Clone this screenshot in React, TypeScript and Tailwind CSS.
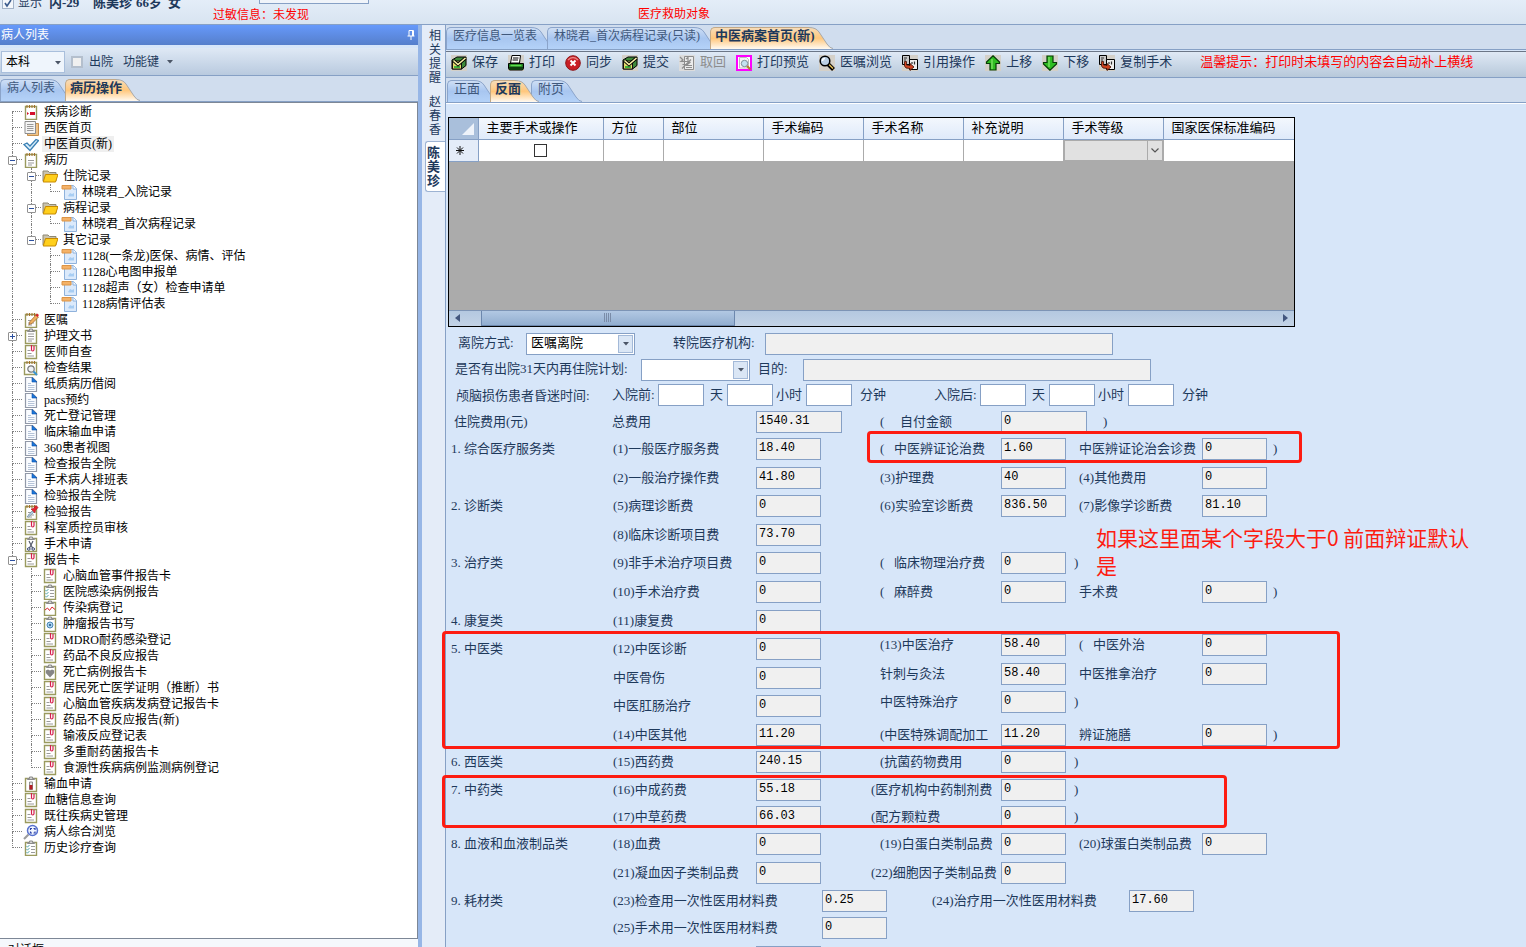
import React from "react";
import { clsx } from "clsx";

/* =====================================================
   DATA
===================================================== */
type TreeItem = {
  text: string;
  icon: string;
  closed?: boolean;
  selected?: boolean;
  children?: TreeItem[];
};

const tree: TreeItem[] = [
  { text: "疾病诊断", icon: "diagnosis" },
  { text: "西医首页", icon: "copy" },
  { text: "中医首页(新)", icon: "check", selected: true },
  {
    text: "病历",
    icon: "notebook",
    children: [
      { text: "住院记录", icon: "folder", children: [{ text: "林晓君_入院记录", icon: "record" }] },
      { text: "病程记录", icon: "folder", children: [{ text: "林晓君_首次病程记录", icon: "record" }] },
      {
        text: "其它记录",
        icon: "folder",
        children: [
          { text: "1128(一条龙)医保、病情、评估", icon: "record" },
          { text: "1128心电图申报单", icon: "record" },
          { text: "1128超声（女）检查申请单", icon: "record" },
          { text: "1128病情评估表", icon: "record" },
        ],
      },
    ],
  },
  { text: "医嘱", icon: "pencil" },
  { text: "护理文书", icon: "clipboard", closed: true },
  { text: "医师自查", icon: "report" },
  { text: "检查结果", icon: "search" },
  { text: "纸质病历借阅", icon: "file" },
  { text: "pacs预约", icon: "file" },
  { text: "死亡登记管理", icon: "file" },
  { text: "临床输血申请", icon: "file" },
  { text: "360患者视图", icon: "file" },
  { text: "检查报告全院", icon: "file" },
  { text: "手术病人排班表", icon: "file" },
  { text: "检验报告全院", icon: "file" },
  { text: "检验报告", icon: "dropper" },
  { text: "科室质控员审核", icon: "report" },
  { text: "手术申请", icon: "scissors" },
  {
    text: "报告卡",
    icon: "report",
    children: [
      { text: "心脑血管事件报告卡", icon: "report" },
      { text: "医院感染病例报告", icon: "checklist" },
      { text: "传染病登记", icon: "chart" },
      { text: "肿瘤报告书写", icon: "tumor" },
      { text: "MDRO耐药感染登记", icon: "report" },
      { text: "药品不良反应报告", icon: "report" },
      { text: "死亡病例报告卡", icon: "heart" },
      { text: "居民死亡医学证明（推断）书", icon: "report" },
      { text: "心脑血管疾病发病登记报告卡", icon: "report" },
      { text: "药品不良反应报告(新)", icon: "report" },
      { text: "输液反应登记表", icon: "report" },
      { text: "多重耐药菌报告卡", icon: "report" },
      { text: "食源性疾病病例监测病例登记", icon: "report" },
    ],
  },
  { text: "输血申请", icon: "blood" },
  { text: "血糖信息查询", icon: "report" },
  { text: "既往疾病史管理", icon: "report" },
  { text: "病人综合浏览", icon: "lens" },
  { text: "历史诊疗查询", icon: "checklist" },
];

const tools = [
  { text: "保存", icon: "save" },
  { text: "打印", icon: "print" },
  { text: "同步", icon: "sync" },
  { text: "提交", icon: "save" },
  { text: "取回", icon: "fetch", disabled: true },
  { text: "打印预览", icon: "preview" },
  { text: "医嘱浏览", icon: "browse" },
  { text: "引用操作", icon: "quote" },
  { text: "上移", icon: "up" },
  { text: "下移", icon: "down" },
  { text: "复制手术", icon: "quote" },
];

const columns = [
  { text: "主要手术或操作", width: "w-[125px]" },
  { text: "方位", width: "w-[60px]" },
  { text: "部位", width: "w-[100px]" },
  { text: "手术编码", width: "w-[100px]" },
  { text: "手术名称", width: "w-[100px]" },
  { text: "补充说明", width: "w-[100px]" },
  { text: "手术等级", width: "w-[100px]" },
  { text: "国家医保标准编码", width: "" },
];

type Fee = { name: string; value?: string; open?: boolean; wide?: boolean };
type FeeLine = {
  height: string;
  group?: string;
  a: Fee;
  b?: Fee;
  c?: Fee;
  close?: "b" | "c";
  low?: boolean;
};

const feeLines: FeeLine[] = [
  {
    height: "h-[29px]",
    group: "1. 综合医疗服务类",
    a: { name: "(1)一般医疗服务费", value: "18.40" },
    b: { name: "中医辨证论治费", value: "1.60", open: true },
    c: { name: "中医辨证论治会诊费", value: "0" },
    close: "c",
  },
  {
    height: "h-[28px]",
    a: { name: "(2)一般治疗操作费", value: "41.80" },
    b: { name: "(3)护理费", value: "40" },
    c: { name: "(4)其他费用", value: "0" },
  },
  {
    height: "h-[29px]",
    group: "2. 诊断类",
    a: { name: "(5)病理诊断费", value: "0" },
    b: { name: "(6)实验室诊断费", value: "836.50" },
    c: { name: "(7)影像学诊断费", value: "81.10" },
  },
  { height: "h-[28px]", a: { name: "(8)临床诊断项目费", value: "73.70" } },
  {
    height: "h-[29px]",
    group: "3. 治疗类",
    a: { name: "(9)非手术治疗项目费", value: "0" },
    b: { name: "临床物理治疗费", value: "0", open: true },
    close: "b",
  },
  {
    height: "h-[29px]",
    a: { name: "(10)手术治疗费", value: "0" },
    b: { name: "麻醉费", value: "0", open: true },
    c: { name: "手术费", value: "0" },
    close: "c",
  },
  { height: "h-[24px]", group: "4. 康复类", a: { name: "(11)康复费", value: "0" } },
  {
    height: "h-[29px]",
    group: "5. 中医类",
    low: true,
    a: { name: "(12)中医诊断", value: "0" },
    b: { name: "(13)中医治疗", value: "58.40" },
    c: { name: "中医外治", value: "0", open: true },
  },
  {
    height: "h-[28px]",
    low: true,
    a: { name: "中医骨伤", value: "0" },
    b: { name: "针刺与灸法", value: "58.40" },
    c: { name: "中医推拿治疗", value: "0" },
  },
  {
    height: "h-[33px]",
    low: true,
    a: { name: "中医肛肠治疗", value: "0" },
    b: { name: "中医特殊治疗", value: "0" },
    close: "b",
  },
  {
    height: "h-[27px]",
    a: { name: "(14)中医其他", value: "11.20" },
    b: { name: "(中医特殊调配加工", value: "11.20" },
    c: { name: "辨证施膳", value: "0" },
    close: "c",
  },
  {
    height: "h-[28px]",
    group: "6. 西医类",
    a: { name: "(15)西药费", value: "240.15" },
    b: { name: "(抗菌药物费用", value: "0" },
    close: "b",
  },
  {
    height: "h-[27px]",
    group: "7. 中药类",
    a: { name: "(16)中成药费", value: "55.18" },
    b: { name: "(医疗机构中药制剂费", value: "0", wide: true },
    close: "b",
  },
  {
    height: "h-[27px]",
    a: { name: "(17)中草药费", value: "66.03" },
    b: { name: "(配方颗粒费", value: "0", wide: true },
    close: "b",
  },
  {
    height: "h-[29px]",
    group: "8. 血液和血液制品类",
    a: { name: "(18)血费", value: "0" },
    b: { name: "(19)白蛋白类制品费", value: "0" },
    c: { name: "(20)球蛋白类制品费", value: "0" },
  },
  {
    height: "h-[28px]",
    a: { name: "(21)凝血因子类制品费", value: "0" },
    b: { name: "(22)细胞因子类制品费", value: "0", wide: true },
  },
];

/* =====================================================
   TREE ICONS
===================================================== */
const Sheet = () => (
  <>
    <path d="M2.5 2.5h11v13h-11z" fill="#fff" stroke="#9a9a5e" strokeWidth="1.4" />
    <path d="M5 8.5h6M5 11h6M5 13h4" stroke="#9b9b9b" />
  </>
);

const Rings = () => (
  <path d="M4 1v3M6.5 1v3M9 1v3M11.5 1v3" stroke="#a5702a" strokeWidth="1" />
);

const Clip = () => (
  <path d="M4.5 3.5v-1h2v-1.500h3v1.500h2v1z" fill="#d4d4d4" stroke="#8b8b8b" />
);

const treeIcons: Record<string, React.ReactNode> = {
  diagnosis: (
    <>
      <path d="M2.5 2.500h11v13h-11z" fill="#fff" stroke="#9a9a5e" strokeWidth="1.400" />
      <Rings />
      <path d="M7 8h5v3H7zM4 8l2 1.500-2 1.500z" fill="#d5102c" />
    </>
  ),
  copy: (
    <>
      <path d="M4.500 3.500h11v12h-11z" fill="#efc287" stroke="#c48f4c" />
      <path d="M2 1.500h10.500v12H2z" fill="#f4f4f4" stroke="#8d8d8d" />
      <path d="M4 4.500h6.500M4 6.500h6.500M4 8.500h6.500M4 10.500h6.500" stroke="#999" />
    </>
  ),
  check: (
    <path d="M1 8.500 4 7l3 3 6-6.500 2.500 1L7 14.500z" fill="#d9eefb" stroke="#3b80b4" strokeWidth="1.300" />
  ),
  notebook: (
    <>
      <Sheet />
      <Rings />
    </>
  ),
  folder: (
    <>
      <path d="M1 3h5l1.500 1.500H14V13H1z" fill="#c9c3ae" stroke="#8f8873" />
      <path d="M3.500 6.500H16L13.500 14H1.200z" fill="#ffcf1c" stroke="#c78a00" />
    </>
  ),
  record: (
    <>
      <path d="M3.500 1.500h9l3 3v11h-12z" fill="#dceafb" stroke="#8fb2dc" />
      <path d="M12 1.500v3.500h3.500" fill="#fff" stroke="#8fb2dc" />
      <path d="M7 12l2-3 2 1 2-1v3.500H8z" fill="#a7cdf3" />
      <path d="M1 1.500h9V5H1z" fill="#f4b268" stroke="#dc9446" />
    </>
  ),
  pencil: (
    <>
      <Sheet />
      <Rings />
      <path d="M6 12.500 7 9.500 13 3l2.500 2L9 11.500z" fill="#efb263" stroke="#a66a2c" strokeWidth=".8" />
      <path d="m12.500 3.500 1.500-2 2 1.500-1.500 2z" fill="#d6242b" />
    </>
  ),
  clipboard: (
    <>
      <Sheet />
      <path d="M5 6h6" stroke="#9b9b9b" />
      <Clip />
    </>
  ),
  report: (
    <>
      <path d="M2.500 1.500h11v13h-11z" fill="#fff" stroke="#9a9a5e" strokeWidth="1.400" />
      <path d="M4.500 6.500h3M4.500 9.500h4M4.500 12h6.500" stroke="#9b9b9b" />
      <path d="M8.500 1v4.500q0 1.500 1.200 1.500T11 5.500V2" fill="none" stroke="#d51e4c" strokeWidth="1.200" />
    </>
  ),
  search: (
    <>
      <path d="M1.500 2.500h12v12h-12z" fill="#fff" stroke="#9a9a5e" strokeWidth="1.400" />
      <Rings />
      <circle cx="8" cy="9" r="3.200" fill="#eef3f7" stroke="#777" strokeWidth="1.200" />
      <path d="m10.500 11.500 3.500 3.500" stroke="#3a94d0" strokeWidth="2" />
    </>
  ),
  file: (
    <>
      <path d="M2.500 1.500h7l4 4v10h-11z" fill="#fafcff" stroke="#9299a8" strokeWidth="1.200" />
      <path d="M9 1.500 14 6H9z" fill="#1c78dc" stroke="#0b4fa8" strokeWidth=".6" />
      <path d="M5 7.500h3M5 9.500h6.500M5 11.500h6.500M5 13.500h6.500" stroke="#b6c4d8" />
    </>
  ),
  dropper: (
    <>
      <Sheet />
      <Rings />
      <path d="m4 13 5-6 1.500 1.500L5.500 13z" fill="#bcd8ee" stroke="#6f8596" strokeWidth=".7" />
      <path d="m8 5 2.500-.500L13 1.500l2 2-2.500 3L12 9z" fill="#e2232e" stroke="#a3121c" strokeWidth=".6" />
    </>
  ),
  scissors: (
    <>
      <path d="M2.500 2.500h11v13h-11z" fill="#fff" stroke="#9a9a5e" strokeWidth="1.400" />
      <Clip />
      <path d="m6 5 3.500 7M10 5l-3.500 7" stroke="#555c6c" strokeWidth="1.200" />
      <circle cx="5.800" cy="13" r="1.300" fill="none" stroke="#30406c" />
      <circle cx="10.200" cy="13" r="1.300" fill="none" stroke="#30406c" />
    </>
  ),
  checklist: (
    <>
      <path d="M2.500 2.500h11v13h-11z" fill="#fff" stroke="#9a9a5e" strokeWidth="1.400" />
      <Clip />
      <path d="M8 6.500h4M8 9.500h4M8 12.500h4" stroke="#9b9b9b" />
      <path d="m3.500 6 1 1.200L6.500 5M3.500 9l1 1.200L6.500 8M3.500 12l1 1.200L6.500 11" fill="none" stroke="#4ba3a8" strokeWidth=".9" />
    </>
  ),
  chart: (
    <>
      <path d="M2.500 2.500h11v13h-11z" fill="#fff" stroke="#9a9a5e" strokeWidth="1.400" />
      <Clip />
      <path d="m3 10 2.500-2 2 2.500L10 7l3 2.500" fill="none" stroke="#d8262e" />
    </>
  ),
  tumor: (
    <>
      <path d="M2.500 2.500h11v13h-11z" fill="#fff" stroke="#9a9a5e" strokeWidth="1.400" />
      <Clip />
      <circle cx="8" cy="9" r="3" fill="#a7d3ef" stroke="#4b87b5" />
      <circle cx="8" cy="9" r="1" fill="#1d4f80" />
    </>
  ),
  heart: (
    <>
      <path d="M2.500 2.500h11v13h-11z" fill="#fff" stroke="#9a9a5e" strokeWidth="1.400" />
      <Clip />
      <path d="M8 13.500 3.800 9V6.500L6 5.500l2 1 2-1 2.200 1V9z" fill="#868686" />
    </>
  ),
  blood: (
    <>
      <path d="M2.500 2.500h11v13h-11z" fill="#fff" stroke="#9a9a5e" strokeWidth="1.400" />
      <Clip />
      <path d="M6.500 6h3v7.500h-3z" fill="#e7e7e7" stroke="#777" strokeWidth=".8" />
      <path d="M6.500 9h3v4.500h-3z" fill="#b31e22" />
    </>
  ),
  lens: (
    <>
      <path d="m1 15 4.500-4.500" stroke="#9d9d9d" strokeWidth="2.200" />
      <circle cx="9.500" cy="6.500" r="5" fill="#f1f6ff" stroke="#5872ce" strokeWidth="1.500" />
      <path d="M7.500 6V4.500H9M10.500 4.500H12V6M12 7.500V9h-1.500M9 9H7.500V7.500" fill="none" stroke="#2a41a8" strokeWidth="1.200" />
    </>
  ),
};

/* =====================================================
   TOOLBAR ICONS
===================================================== */
const toolIcons: Record<string, React.ReactNode> = {
  save: (
    <>
      <path d="M0 0h16v16H0z" fill="#d4d0c8" />
      <path d="M1 5 6 2h9v8.500L10.500 14H1z" fill="#3f8a3a" stroke="#000" />
      <path d="M1.500 6h9v8h-9z" fill="#e6d96a" stroke="#111" />
      <path d="M3 12h6" stroke="#43b13c" strokeWidth="2" />
      <path d="m2.500 5.500 4.500 4L14.500 3" fill="none" stroke="#000" strokeWidth="3.200" />
      <path d="m2.500 5.500 4.500 4L14.500 3" fill="none" stroke="#fbf3a6" strokeWidth="1.600" />
    </>
  ),
  print: (
    <>
      <path d="M0 0h16v16H0z" fill="#d4d0c8" />
      <path d="M4 .500h8.500L11.500 8H2.500z" fill="#fff" stroke="#000" />
      <path d="M5 3h5.500M4.500 5H10" stroke="#000" />
      <path d="M.500 8.500h15v5l-1 1.500h-13l-1-1.500z" fill="#1d7a1d" stroke="#000" />
      <path d="M2.500 10.500h11" stroke="#5edc4c" strokeWidth="1.500" />
      <path d="M1 13h14" stroke="#000" />
    </>
  ),
  sync: (
    <>
      <circle cx="8" cy="8" r="7.300" fill="#c81e24" stroke="#8d1518" />
      <path d="M3 5q5-5 10 0" fill="none" stroke="#e98485" strokeWidth="1.500" />
      <path d="m5.500 5.500 5 5M10.500 5.500l-5 5" stroke="#fff" strokeWidth="2" />
    </>
  ),
  fetch: (
    <>
      <path d="M0 0h16v16H0z" fill="#dcdcdc" />
      <path d="M5.500 1.500h9v13h-9z" fill="#ececec" stroke="#8d8d8d" />
      <path d="m1 2 3 3-2 1.500h7V2.500L7 4M3.500 9.500h5l3-2.500M3 13.500l9-9M7 10.500h6M7 12.500h6" fill="none" stroke="#8d8d8d" strokeWidth="1.200" />
    </>
  ),
  preview: (
    <>
      <path d="M1 1h14v14H1z" fill="#fff" stroke="#f0f" strokeWidth="2" />
      <path d="M3.500 2.500h7l2 2V13h-9z" fill="#f5f5f5" stroke="#bcbcbc" />
      <circle cx="8.500" cy="8.500" r="3.200" fill="#c3e2f0" stroke="#7d8f99" />
      <path d="m11 11 3.500 3.500" stroke="#b57a34" strokeWidth="2.200" />
    </>
  ),
  browse: (
    <>
      <path d="M0 0h16v16H0z" fill="#d4d0c8" />
      <path d="m9 9 5.500 5.500" stroke="#000" strokeWidth="4" />
      <path d="m10 9.500 4 4" stroke="#e9c55c" strokeWidth="1.500" />
      <circle cx="6" cy="6" r="4.800" fill="#bcd0e4" stroke="#000" strokeWidth="1.500" />
      <path d="M3.500 6q0-2.500 2.500-2.500" fill="none" stroke="#fff" strokeWidth="1.500" />
    </>
  ),
  quote: (
    <>
      <path d="M0 0h16v16H0z" fill="#d4d0c8" />
      <path d="M.500.500h7v9h-7z" fill="#c9c9c9" stroke="#000" />
      <path d="M7.500 4.500h8v10h-8z" fill="#eee" stroke="#000" />
      <path d="M2 3h3M2 5h2M12.500 6.500v3M10 7v2" stroke="#333" strokeWidth="1.200" />
      <path d="M2.500 6.500h2V10l3.500.500V8.500l4 3.500-4 3.500v-2l-4-.500-1.500-2z" fill="#cf4421" stroke="#401006" strokeWidth=".8" />
    </>
  ),
  up: (
    <>
      <path d="M0 0h16v16H0z" fill="#d4d0c8" />
      <path d="M8 .800 14.500 7v1.500H11V15H5V8.500H1.500V7z" fill="#2fbd22" stroke="#063c06" strokeWidth="1.200" />
      <path d="M7 4v10" stroke="#9af07d" />
    </>
  ),
  down: (
    <>
      <path d="M0 0h16v16H0z" fill="#d4d0c8" />
      <path d="M8 15.200 1.500 9V7.500H5V1h6v6.500h3.500V9z" fill="#2fbd22" stroke="#063c06" strokeWidth="1.200" />
      <path d="M7 2v10" stroke="#9af07d" />
    </>
  ),
};

const Icon = ({ children }: { children: React.ReactNode }) => (
  <svg viewBox="0 0 16 16" className="h-4 w-4 shrink-0" aria-hidden="true">
    {children}
  </svg>
);

/* =====================================================
   SMALL COMPONENTS
===================================================== */
const Tab = ({ text, active, large }: { text: string; active?: boolean; large?: boolean }) => {
  const id = React.useId();
  return (
    <button
      type="button"
      role="tab"
      aria-selected={!!active}
      className={clsx(
        "flex h-[22px] leading-4",
        active ? "relative z-10 text-[13px] font-bold text-[#1e395b]" : "text-[#40587c]",
        !active && (large ? "text-[13px]" : "text-xs")
      )}
    >
      <span
        className={clsx(
          "block h-full whitespace-nowrap rounded-tl-[5px] border-l border-t bg-gradient-to-b",
          active
            ? "border-[#c3a987] from-[#f7dcb8] via-[#ffc77c] to-[#fffaf2] pl-1"
            : "border-[#8ba4ca] from-[#cfdff5] via-[#a8c6f0] to-[#b4d2f8] pl-1.5"
        )}
      >
        <span className="relative z-10 -mr-1.5 block">{text}</span>
      </span>
      <svg viewBox="0 0 24 22" className="-mr-2 h-[22px] w-6" aria-hidden="true">
        <defs>
          <linearGradient id={id} x1="0" y1="0" x2="0" y2="1">
            <stop offset="0" stopColor={active ? "#f7dcb8" : "#cfdff5"} />
            <stop offset=".5" stopColor={active ? "#ffc77c" : "#a8c6f0"} />
            <stop offset="1" stopColor={active ? "#fffaf2" : "#b4d2f8"} />
          </linearGradient>
        </defs>
        <path d="M0 22V.5Q7 .5 10 5L18 17Q21 21.500 24 22z" fill={`url(#${id})`} />
        <path d="M0 .5Q7 .5 10 5L18 17Q21 21.500 24 21.500" fill="none" stroke={active ? "#a9a9a9" : "#8ba4ca"} />
      </svg>
    </button>
  );
};

const Guide = ({ line, branch, last, first }: { line: boolean; branch?: boolean; last?: boolean; first?: boolean }) => (
  <span className="flex h-4 w-[19px] shrink-0 justify-end">
    <span className="w-2.5">
      <span
        className={clsx(
          "block h-2 border-dotted border-[#808080]",
          line && !first && "border-l",
          branch && "border-b"
        )}
      />
      <span className={clsx("block h-2 border-dotted border-[#808080]", line && !last && "border-l")} />
    </span>
  </span>
);

const TreeNode = ({ item, trail, last, first }: { item: TreeItem; trail: boolean[]; last: boolean; first: boolean }) => (
  <li role="treeitem" aria-expanded={item.children ? true : item.closed ? false : undefined}>
    <div className="flex h-4 items-center">
      {trail.map((line, i) => (
        <Guide key={i} line={line} />
      ))}
      <span className="relative mr-px">
        <Guide line branch last={last} first={first} />
        {(item.children || item.closed) && (
          <button
            type="button"
            aria-label={item.closed ? "展开" : "收起"}
            className="absolute left-[5px] top-1 flex h-[9px] w-[9px] items-center justify-center rounded-[1px] border border-[#919191] bg-white"
          >
            <svg viewBox="0 0 5 5" className="h-[5px] w-[5px]" aria-hidden="true">
              <path d={item.closed ? "M0 2.500h5M2.500 0v5" : "M0 2.500h5"} stroke="#2b4f9e" />
            </svg>
          </button>
        )}
      </span>
      <Icon>{treeIcons[item.icon]}</Icon>
      <span className={clsx("ml-[3px] whitespace-nowrap px-0.5 leading-4", item.selected && "bg-[#efefef]")}>
        {item.text}
      </span>
    </div>
    {item.children && (
      <ul role="group">
        {item.children.map((child, i) => (
          <TreeNode
            key={i}
            item={child}
            trail={[...trail, !last]}
            last={i === item.children!.length - 1}
            first={false}
          />
        ))}
      </ul>
    )}
  </li>
);

const Box = ({
  id,
  label,
  value = "",
  width = "w-[65px]",
  editable,
}: {
  id?: string;
  label?: string;
  value?: string;
  width?: string;
  editable?: boolean;
}) => (
  <input
    id={id}
    aria-label={label}
    defaultValue={value}
    readOnly={!editable}
    className={clsx(
      "block h-[22px] shrink-0 border border-[#86a0c5] px-0.5 pb-0.5 font-['Liberation_Mono','Noto_Sans_CJK_SC',monospace] text-xs text-black outline-none",
      editable ? "bg-white" : "bg-[#f0f0f0]",
      width
    )}
  />
);

const Arrow = () => (
  <svg viewBox="0 0 6 4" className="h-1 w-1.5" aria-hidden="true">
    <path d="M0 0h6L3 3.500z" fill="#4b5566" />
  </svg>
);

const Select = ({ id, value = "" }: { id: string; value?: string }) => (
  <span className="relative block w-[109px] shrink-0">
    <select
      id={id}
      defaultValue={value}
      className="block h-[22px] w-full appearance-none border border-[#86a0c5] bg-white pb-0.5 pl-1 text-[13px] leading-[18px] text-black outline-none"
    >
      <option value={value}>{value}</option>
    </select>
    <span className="pointer-events-none absolute bottom-0.5 right-0.5 top-0.5 flex w-[15px] items-center justify-center border border-[#a3b9d8] bg-[#dae6f5]">
      <Arrow />
    </span>
  </span>
);

const FeeName = ({ fee, id }: { fee: Fee; id: string }) => (
  <label htmlFor={id} className={clsx("flex whitespace-nowrap", !fee.wide && "pl-[9px]")}>
    {fee.open && <span className="w-3.5">(</span>}
    {fee.name}
  </label>
);

const FeeRow = ({ line, index }: { line: FeeLine; index: number }) => {
  const low = line.low ? "pt-1" : "";
  return (
    <div
      className={clsx(
        "grid grid-cols-[153px_152px_115px_130px_69px_132px_65px_auto] items-start justify-start leading-[22px]",
        line.height
      )}
    >
      <span className={clsx("whitespace-nowrap", low)}>{line.group}</span>
      <span className={low}>
        <FeeName fee={line.a} id={`fee-${index}-a`} />
      </span>
      <span className={low}>
        <Box id={`fee-${index}-a`} value={line.a.value} />
      </span>
      {line.b && (
        <>
          <FeeName fee={line.b} id={`fee-${index}-b`} />
          <Box id={`fee-${index}-b`} value={line.b.value} />
        </>
      )}
      {line.close === "b" && <span className="pl-1">)</span>}
      {line.c && (
        <>
          <FeeName fee={line.c} id={`fee-${index}-c`} />
          <Box id={`fee-${index}-c`} value={line.c.value} />
        </>
      )}
      {line.close === "c" && <span className="pl-1.5">)</span>}
    </div>
  );
};

const Duration = ({ title }: { title: string }) => (
  <fieldset className="flex leading-[22px]">
    <legend className="float-left w-[46px] whitespace-nowrap">{title}</legend>
    <Box editable width="w-[46px]" label={`${title}天`} />
    <span className="w-[23px] pl-1.5">天</span>
    <Box editable width="w-[46px]" label={`${title}小时`} />
    <span className="w-[33px] pl-[3px]">小时</span>
    <Box editable width="w-[46px]" label={`${title}分钟`} />
    <span className="pl-2">分钟</span>
  </fieldset>
);

/* =====================================================
   SECTIONS
===================================================== */
const PatientBar = () => (
  <header className="flex h-[25px] shrink-0 items-start overflow-hidden border-b border-[#86a0c5] bg-gradient-to-b from-[#e4edf8] to-[#d8e4f1] text-xs">
    <div className="-mt-[5px] flex w-[213px] shrink-0 items-center whitespace-nowrap leading-4">
      <label className="flex w-[49px] items-center gap-1 pl-0.5">
        <span className="relative block h-3 w-3">
          <input
            type="checkbox"
            defaultChecked
            className="block h-3 w-3 appearance-none border border-[#a3b3c8] bg-[#f4f7fb]"
          />
          <svg viewBox="0 0 12 12" className="pointer-events-none absolute inset-0" aria-hidden="true">
            <path d="m3 6 2 3 4-6" fill="none" stroke="#3b5b8c" strokeWidth="1.600" />
          </svg>
        </span>
        显示
      </label>
      <b className="w-11 text-[13px]">内-29</b>
      <b className="w-[43px] text-[13px]">陈美珍</b>
      <b className="w-8 text-[13px]">66岁</b>
      <b className="text-[13px]">女</b>
    </div>
    <div className="w-[425px] shrink-0">
      <input aria-label="病人信息" className="-mt-3 ml-[46px] block h-4 w-[110px] border border-[#86a0c5] bg-[#f0f4fa]" />
      <p className="leading-[22px] text-[#ff0000]">过敏信息：未发现</p>
    </div>
    <p className="pt-1 leading-5 text-[#ff0000]">医疗救助对象</p>
  </header>
);

const Sidebar = () => (
  <aside className="flex w-[422px] shrink-0 flex-col border-r-4 border-[#97b6e6] text-xs">
    <div className="flex h-5 shrink-0 items-center justify-between bg-gradient-to-b from-[#6699fb] to-[#567fcb] pl-px pr-0.5 text-white">
      <h2 className="leading-[18px]">病人列表</h2>
      <button type="button" aria-label="固定">
        <svg viewBox="0 0 10 10" className="h-2.5 w-2.5" aria-hidden="true">
          <path d="M3 .5h4.500V6M3 .5V6M1.500 6h7M5 6v4M6.500 1v5" fill="none" stroke="#fff" />
        </svg>
      </button>
    </div>
    <div className="mt-[3px] flex h-7 shrink-0 items-center border-b border-[#86a0c5] bg-gradient-to-b from-[#dfe9f5] to-[#b9cadf] pl-px">
      <span className="relative block w-16">
        <select
          aria-label="科室"
          className="block h-[22px] w-full appearance-none border border-[#a9bfdc] bg-[#eff5fc] pl-1 leading-4 text-black outline-none"
        >
          <option>本科</option>
        </select>
        <span className="pointer-events-none absolute right-1 top-2.5">
          <Arrow />
        </span>
      </span>
      <label className="ml-1.5 flex items-center gap-1.5">
        <input type="checkbox" className="h-3 w-3 appearance-none border-2 border-[#b4bfcd] bg-[#f0f0f0]" />
        出院
      </label>
      <button type="button" className="ml-2.5 flex items-center gap-2">
        功能键
        <Arrow />
      </button>
    </div>
    <div role="tablist" className="flex h-[26px] shrink-0 items-end border-b border-[#86a0c5] bg-[#d0ddee]">
      <Tab text="病人列表" />
      <Tab text="病历操作" active />
    </div>
    <nav className="min-h-0 flex-1 overflow-hidden border-b border-r border-t border-[#7d8796] bg-white pl-[3px] pt-px text-black">
      <ul role="tree">
        {tree.map((item, i) => (
          <TreeNode key={i} item={item} trail={[]} first={i === 0} last={i === tree.length - 1} />
        ))}
      </ul>
    </nav>
    <p className="h-2 shrink-0 overflow-hidden bg-[#f5f8fc] pl-2 pt-1 leading-[14px] text-black">对话框</p>
  </aside>
);

const PatientTabs = () => (
  <div className="flex w-6 shrink-0 flex-col border-r border-[#86a0c5] bg-[#e4ecf8] pl-[3px] text-xs leading-[14px]">
    <button type="button" className="ml-1 mt-1 w-3 break-all leading-[14px]">
      相关提醒
    </button>
    <button type="button" className="ml-1 mt-2.5 w-3 break-all leading-[14px]">
      赵春香
    </button>
    <button
      type="button"
      className="mt-1 flex h-[51px] w-5 items-center rounded-l-[3px] border border-r-0 border-[#9db3d3] bg-white pl-px text-[13px] font-bold leading-[14px]"
    >
      <span className="w-[13px] break-all">陈美珍</span>
    </button>
  </div>
);

const Toolbar = () => (
  <div className="flex h-[27px] shrink-0 items-start border-b border-t border-b-[#86a0c5] border-t-[#6b7687] bg-gradient-to-b from-[#dfe9f5] to-[#b7c8da] pl-[5px] pt-[3px] leading-[14px]">
    <div className="flex gap-2.5">
      {tools.map((tool, i) => (
        <button
          key={i}
          type="button"
          disabled={tool.disabled}
          className={clsx("flex items-start gap-[5px] whitespace-nowrap", tool.disabled && "text-[#8d8d8d]")}
        >
          <Icon>{toolIcons[tool.icon]}</Icon>
          {tool.text}
        </button>
      ))}
    </div>
    <p className="ml-7 whitespace-nowrap text-[#ff0000]">温馨提示：打印时未填写的内容会自动补上横线</p>
  </div>
);

const OperationGrid = () => (
  <div className="w-[847px] border border-black bg-[#ababab] text-black">
    <table className="w-full table-fixed border-collapse">
      <thead>
        <tr className="h-[21px] bg-gradient-to-b from-[#f3f7fd] to-[#dfeafa]">
          <th className="w-[29px] border-b border-r border-[#86a0c5] bg-[#a9bfdb] p-0">
            <svg viewBox="0 0 28 19" className="block h-[19px] w-7" aria-hidden="true">
              <path d="M25 4v12H13z" fill="#eef3fa" />
            </svg>
          </th>
          {columns.map((col) => (
            <th
              key={col.text}
              className={clsx(
                "whitespace-nowrap border-b border-r border-[#86a0c5] p-0 pl-2 text-left font-normal leading-[18px] last:border-r-0",
                col.width
              )}
            >
              {col.text}
            </th>
          ))}
        </tr>
      </thead>
      <tbody>
        <tr className="h-[22px] bg-white">
          <td className="border-b border-r border-[#86a0c5] bg-[#e4ecf8] p-0">
            <svg viewBox="0 0 28 20" className="block h-5 w-7" aria-hidden="true">
              <path d="M11 6v9M7 10.500h8M8 7.500l6 6M14 7.500l-6 6" stroke="#111" />
            </svg>
          </td>
          <td className="border-r border-[#ababab] p-0">
            <input
              type="checkbox"
              aria-label="主要手术或操作"
              className="mx-auto block h-[13px] w-[13px] appearance-none border border-[#333] bg-white"
            />
          </td>
          <td className="border-r border-[#ababab]" />
          <td className="border-r border-[#ababab]" />
          <td className="border-r border-[#ababab]" />
          <td className="border-r border-[#ababab]" />
          <td className="border-r border-[#ababab]" />
          <td className="border-r border-[#ababab] p-0">
            <span className="relative block">
              <select
                aria-label="手术等级"
                className="block h-[21px] w-full appearance-none border border-[#ababab] bg-[#e1e1e1] outline-none"
              />
              <span className="pointer-events-none absolute inset-y-0 right-0 flex w-4 items-center justify-center border border-[#ababab]">
                <svg viewBox="0 0 8 5" className="h-[5px] w-2" aria-hidden="true">
                  <path d="m.5.5 3.500 3.500L7.500.5" fill="none" stroke="#555" strokeWidth="1.200" />
                </svg>
              </span>
            </span>
          </td>
          <td />
        </tr>
      </tbody>
    </table>
    <div className="mt-[148px] flex h-4 border-t border-[#7d94b5] bg-gradient-to-b from-[#b4c8e0] to-[#c3d3e6]">
      <button type="button" aria-label="向左" className="flex w-8 items-center pl-1.5">
        <svg viewBox="0 0 5 8" className="h-2 w-[5px]" aria-hidden="true">
          <path d="M5 0v8L0 4z" fill="#43567e" />
        </svg>
      </button>
      <div className="flex w-[254px] items-center justify-center border border-t-0 border-[#6c87ad] bg-gradient-to-b from-[#b2c8e3] to-[#92aed0]">
        <svg viewBox="0 0 8 9" className="h-[9px] w-2" aria-hidden="true">
          <path d="M.5 0v9M2.500 0v9M4.500 0v9M6.500 0v9" stroke="#7a8ca8" />
        </svg>
      </div>
      <button type="button" aria-label="向右" className="ml-auto flex items-center pr-1.5">
        <svg viewBox="0 0 5 8" className="h-2 w-[5px]" aria-hidden="true">
          <path d="M0 0v8l5-4z" fill="#43567e" />
        </svg>
      </button>
    </div>
  </div>
);

const FeeForm = () => (
  <form className="pl-[5px] pt-1.5">
    <div className="flex h-[26px] items-start pl-[7px] leading-5">
      <label htmlFor="leave" className="w-[68px]">
        离院方式:
      </label>
      <Select id="leave" value="医嘱离院" />
      <label htmlFor="hospital" className="ml-[38px] w-[92px]">
        转院医疗机构:
      </label>
      <Box id="hospital" width="w-[348px]" />
    </div>
    <div className="flex h-[25px] items-start pl-1 leading-5">
      <label htmlFor="again" className="w-[186px] whitespace-nowrap">
        是否有出院31天内再住院计划:
      </label>
      <Select id="again" />
      <label htmlFor="goal" className="ml-2 w-[45px]">
        目的:
      </label>
      <Box id="goal" width="w-[348px]" />
    </div>
    <div className="flex h-[27px] items-start pl-[5px]">
      <span className="w-[156px] leading-6">颅脑损伤患者昏迷时间:</span>
      <Duration title="入院前:" />
      <div className="ml-12">
        <Duration title="入院后:" />
      </div>
    </div>
    <div className="flex h-[27px] items-start pl-[3px] leading-[22px]">
      <span className="w-[158px]">住院费用(元)</span>
      <label htmlFor="total" className="w-[144px]">
        总费用
      </label>
      <Box id="total" value="1540.31" width="w-[86px]" />
      <label htmlFor="own" className="ml-[38px] flex w-[121px]">
        <span className="w-5">(</span>
        自付金额
      </label>
      <Box id="own" value="0" width="w-[86px]" />
      <span className="pl-4">)</span>
    </div>
    {feeLines.map((line, i) => (
      <FeeRow key={i} line={line} index={i} />
    ))}
    <div className="flex h-[27px] items-start leading-[22px]">
      <span className="w-[162px]">9. 耗材类</span>
      <label htmlFor="m23" className="w-[209px]">
        (23)检查用一次性医用材料费
      </label>
      <Box id="m23" value="0.25" />
      <label htmlFor="m24" className="ml-[45px] w-[197px]">
        (24)治疗用一次性医用材料费
      </label>
      <Box id="m24" value="17.60" />
    </div>
    <div className="flex h-[29px] items-start pl-[162px] leading-[22px]">
      <label htmlFor="m25" className="w-[209px]">
        (25)手术用一次性医用材料费
      </label>
      <Box id="m25" value="0" />
    </div>
    <div className="pl-[305px]">
      <Box label="其他类" />
    </div>
  </form>
);

/* =====================================================
   MAIN COMPONENT
===================================================== */
const App: React.FC = () => (
  <div className="relative flex h-screen flex-col overflow-hidden bg-[#d7e6f9] font-['Liberation_Serif','Noto_Sans_CJK_SC',sans-serif] text-[13px] text-[#1e395b]">
    <PatientBar />
    <div className="flex min-h-0 flex-1">
      <Sidebar />
      <PatientTabs />
      <main className="flex min-w-0 flex-1 flex-col overflow-hidden">
        <div role="tablist" className="flex h-[25px] shrink-0 items-end border-b border-[#86a0c5] bg-[#d0ddee]">
          <Tab text="医疗信息一览表" />
          <Tab text="林晓君_首次病程记录(只读)" />
          <Tab text="中医病案首页(新)" active />
        </div>
        <div className="mt-px">
          <Toolbar />
        </div>
        <div role="tablist" className="flex h-[25px] shrink-0 items-end border-b border-[#86a0c5] bg-[#d0ddee] pl-px">
          <Tab text="正面" large />
          <Tab text="反面" active />
          <Tab text="附页" large />
        </div>
        <div className="border-t border-white pl-0.5 pt-[13px]">
          <OperationGrid />
        </div>
        <FeeForm />
      </main>
    </div>

    {/* review marks drawn over the form */}
    <div className="pointer-events-none absolute left-[867px] top-[431px] h-8 w-[435px] rounded-[4px] border-[3px] border-[#fd1c12]" />
    <div className="pointer-events-none absolute left-[442px] top-[631px] h-[118px] w-[898px] rounded-[4px] border-[3px] border-[#fd1c12]" />
    <div className="pointer-events-none absolute left-[442px] top-[775px] h-[53px] w-[785px] rounded-[4px] border-[3px] border-[#fd1c12]" />
    <p className="pointer-events-none absolute left-[1096px] top-[523px] w-[384px] font-['Noto_Sans_CJK_SC',sans-serif] text-[21px] leading-7 text-[#fd1c12]">
      如果这里面某个字段大于0 前面辩证默认是
    </p>
  </div>
);

export default App;
